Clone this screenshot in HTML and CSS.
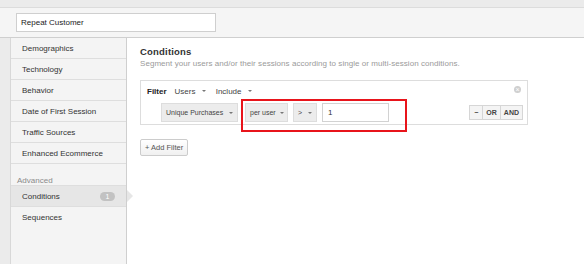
FILE: index.html
```html
<!DOCTYPE html>
<html lang="en">

<head>
    <meta charset="UTF-8">
    <meta name="viewport" content="width=device-width, initial-scale=1.0">
    <title>Segment Builder</title>

    <link rel="stylesheet" href="styles.css">
</head>

<body>
    <div class="header">
        <input type="text" class="segName" value="Repeat Customer">
    </div>
    <div class="layout">
        <ul class="sidebar">
            <li class="navItem">Demographics</li>
            <li class="navItem">Technology</li>
            <li class="navItem">Behavior</li>
            <li class="navItem">Date of First Session</li>
            <li class="navItem">Traffic Sources</li>
            <li class="navItem">Enhanced Ecommerce</li>
            <li class="navLabel">Advanced</li>
            <li class="navItem active">Conditions <span class="badge">1</span></li>
            <li class="navItem plain">Sequences</li>
        </ul>
        <div class="main">
            <h2>Conditions</h2>
            <p class="sub">Segment your users and/or their sessions according to single or multi-session conditions.</p>

            <div class="filterBox">
                <span class="closeBtn">&times;</span>
                <div class="filterHead">
                    <b>Filter</b>
                    <span class="drop">Users <i class="caret"></i></span>
                    <span class="drop">Include <i class="caret"></i></span>
                </div>
                <div class="condRow">
                    <span class="sel wide">Unique Purchases <i class="caret"></i></span>
                    <span class="sel">per user <i class="caret"></i></span>
                    <span class="sel small">&gt; <i class="caret"></i></span>
                    <input type="text" class="valInput" value="1">
                    <div class="ops">
                        <span class="op">&minus;</span><span class="op">OR</span><span class="op">AND</span>
                    </div>
                    <div class="highlight"></div>
                </div>
            </div>

            <button class="addFilter">+ Add Filter</button>
        </div>
    </div>
</body>

</html>
```

FILE: styles.css
```css
* {
    margin: 0;
    padding: 0;
    box-sizing: border-box;
}

body {
    font-family: "Liberation Sans", Arial, sans-serif;
    font-size: 8px;
    color: #333;
    background-color: #ebebeb;
    height: 264px;
    overflow: hidden;
}

.header {
    margin-top: 7px;
    height: 31px;
    border-top: 1px solid #dcdcdc;
    border-bottom: 1px solid #cfcfcf;
    background-color: #f5f5f5;
    padding: 5px 0 0 16px;
}

.segName {
    width: 200px;
    height: 19px;
    border: 1px solid #cfcfcf;
    background-color: white;
    padding: 0 4px;
    font-family: inherit;
    font-size: 8px;
    color: #222;
    outline: none;
}

.layout {
    display: flex;
    padding-left: 10px;
    height: 226px;
}

.sidebar {
    list-style: none;
    width: 117px;
    background-color: #f4f4f4;
    border-left: 1px solid #d8d8d8;
    border-right: 1px solid #cfcfcf;
}

.navItem {
    position: relative;
    display: flex;
    align-items: center;
    height: 21px;
    padding-left: 11px;
    border-bottom: 1px solid #dedede;
    color: #333;
}

.navLabel {
    height: 22px;
    padding: 12px 0 0 6px;
    color: #8a8a8a;
    border-bottom: 1px solid #dedede;
}

.navItem.active {
    background-color: #e6e6e6;
}

.navItem.active::after {
    content: "";
    position: absolute;
    right: -7px;
    top: 4px;
    border-left: 6px solid #e6e6e6;
    border-top: 6px solid transparent;
    border-bottom: 6px solid transparent;
}

.navItem.plain {
    border-bottom: none;
}

.badge {
    margin-left: auto;
    margin-right: 11px;
    width: 15px;
    height: 9px;
    border-radius: 5px;
    background-color: #c2c2c2;
    color: white;
    font-size: 7px;
    text-align: center;
    line-height: 9px;
}

.main {
    flex: 1;
    background-color: white;
    padding: 8px 13px;
}

h2 {
    font-size: 9.5px;
    color: #333;
    letter-spacing: .2px;
}

.sub {
    color: #9a9a9a;
    margin-top: 2px;
    letter-spacing: .05px;
}

.filterBox {
    position: relative;
    width: 388px;
    height: 45px;
    margin-top: 12px;
    border: 1px solid #dddddd;
    padding: 4px 0 0 6px;
}

.filterHead {
    display: flex;
    align-items: center;
    gap: 8px;
    height: 12px;
}

.filterHead b {
    color: #222;
}

.drop {
    color: #444;
    margin-right: 2px;
}

.caret {
    display: inline-block;
    margin-left: 4px;
    vertical-align: middle;
    border-top: 2px solid #777;
    border-left: 2px solid transparent;
    border-right: 2px solid transparent;
}

.closeBtn {
    position: absolute;
    right: 6px;
    top: 5px;
    width: 7px;
    height: 7px;
    border-radius: 50%;
    background-color: #cfcfcf;
    color: white;
    font-size: 7px;
    line-height: 7px;
    text-align: center;
}

.condRow {
    position: relative;
    display: flex;
    align-items: center;
    margin: 6px 0 0 14px;
    height: 19px;
}

.sel {
    display: flex;
    align-items: center;
    justify-content: space-between;
    flex-shrink: 0;
    white-space: nowrap;
    height: 19px;
    padding: 0 4px;
    margin-right: 5px;
    background-color: #ececec;
    border: 1px solid #dddddd;
    color: #444;
    font-size: 7px;
    width: 43px;
}

.sel.wide {
    width: 77px;
    margin-right: 7px;
}

.sel.small {
    width: 24px;
}

.valInput {
    flex-shrink: 0;
    width: 67px;
    height: 19px;
    border: 1px solid #d2d2d2;
    padding: 0 5px;
    font-family: inherit;
    font-size: 8px;
    color: #333;
    outline: none;
}

.ops {
    display: flex;
    margin-left: auto;
    margin-right: 4px;
    border: 1px solid #d6d6d6;
    background-color: #f4f4f4;
}

.op {
    height: 13px;
    line-height: 13px;
    padding: 0 3px;
    font-size: 7px;
    font-weight: bold;
    color: #444;
    border-left: 1px solid #d6d6d6;
}

.op:first-child {
    border-left: none;
    padding: 0 4px;
}

.highlight {
    position: absolute;
    left: 80px;
    top: -4px;
    width: 166px;
    height: 33px;
    border: 2px solid #e8141b;
}

.addFilter {
    margin-top: 14px;
    height: 17px;
    padding: 0 4px;
    font-family: inherit;
    font-size: 7.5px;
    color: #555;
    border: 1px solid #cccccc;
    border-radius: 2px;
    background: linear-gradient(#ffffff, #f0f0f0);
}
```
